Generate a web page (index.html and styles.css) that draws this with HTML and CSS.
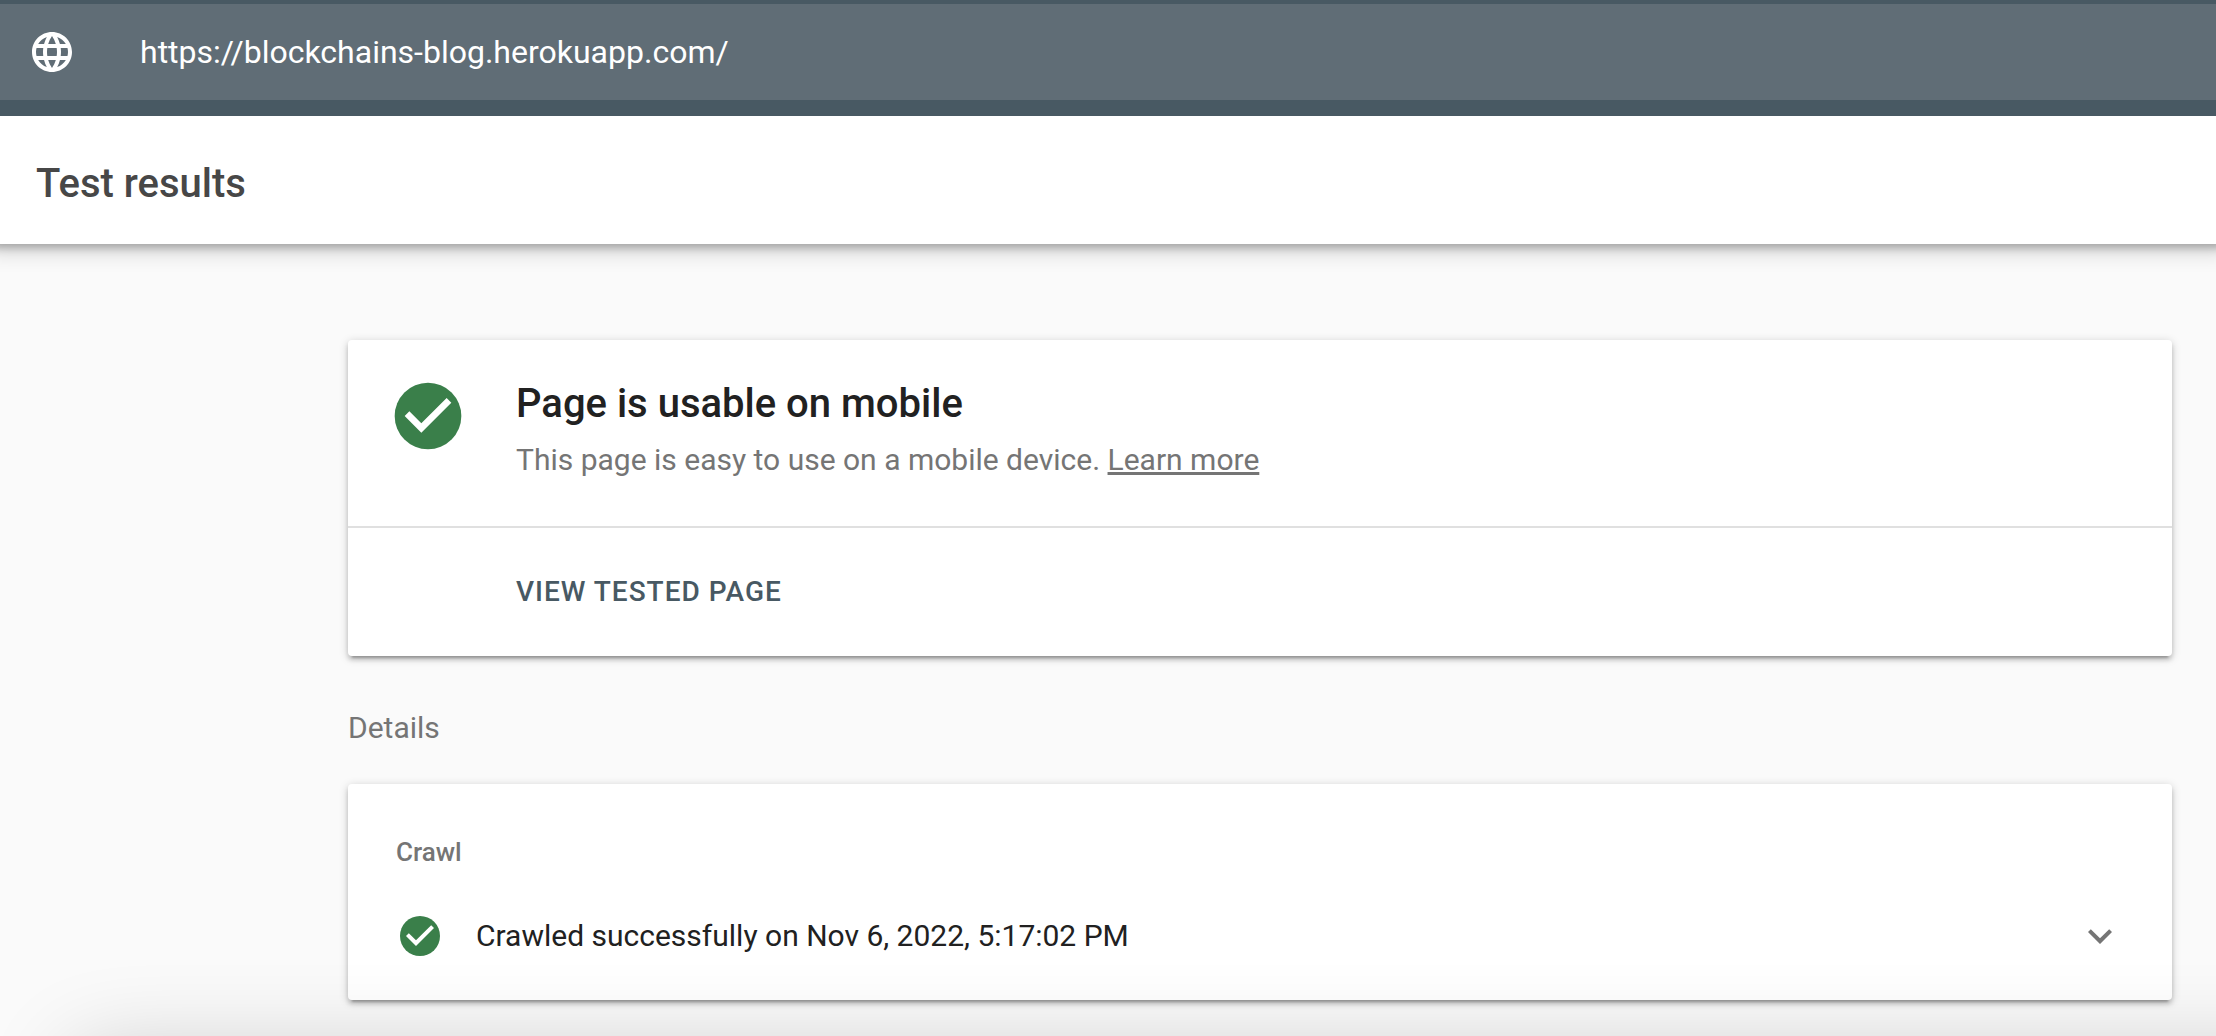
FILE: index.html
```html
<!DOCTYPE html>
<html lang="en">
<head>
<meta charset="utf-8">
<meta name="viewport" content="width=device-width, initial-scale=1">
<title>Test results</title>
<link rel="stylesheet" href="styles.css">
</head>
<body>
<header class="topbar">
  <form class="url-bar">
    <svg class="globe" viewBox="0 0 24 24" aria-hidden="true"><path fill="currentColor" d="M11.99 2C6.47 2 2 6.48 2 12s4.47 10 9.99 10C17.52 22 22 17.52 22 12S17.52 2 11.99 2zm6.93 6h-2.95c-.32-1.25-.78-2.45-1.38-3.56 1.84.63 3.37 1.91 4.33 3.56zM12 4.04c.83 1.2 1.48 2.53 1.91 3.96h-3.82c.43-1.43 1.08-2.76 1.91-3.96zM4.26 14C4.1 13.36 4 12.69 4 12s.1-1.36.26-2h3.38c-.08.66-.14 1.32-.14 2s.06 1.34.14 2H4.26zm.82 2h2.95c.32 1.25.78 2.45 1.38 3.56-1.84-.63-3.37-1.9-4.33-3.56zm2.95-8H5.08c.96-1.66 2.49-2.93 4.33-3.56C8.81 5.55 8.35 6.75 8.03 8zM12 19.96c-.83-1.2-1.48-2.53-1.91-3.96h3.82c-.43 1.43-1.08 2.76-1.91 3.96zM14.34 14H9.66c-.09-.66-.16-1.32-.16-2s.07-1.35.16-2h4.68c.09.65.16 1.32.16 2s-.07 1.34-.16 2zm.25 5.56c.6-1.11 1.06-2.31 1.38-3.56h2.95c-.96 1.65-2.49 2.93-4.33 3.56zM16.36 14c.08-.66.14-1.32.14-2s-.06-1.34-.14-2h3.38c.16.64.26 1.31.26 2s-.1 1.36-.26 2h-3.38z"/></svg>
    <input class="url-input" type="text" aria-label="URL to test" value="https://blockchains-blog.herokuapp.com/" spellcheck="false">
  </form>
</header>
<div class="titlebar"><h1 class="title">Test results</h1></div>
<main class="content">
  <section class="card">
    <div class="verdict">
      <svg class="check-large" viewBox="0 0 24 24" aria-hidden="true"><circle cx="12" cy="12" r="10" fill="#3a7f4a"/><path fill="#fff" d="M10 17l-5-5 1.41-1.41L10 14.17l7.59-7.59L19 8z"/></svg>
      <div class="verdict-text">
        <h2 class="verdict-title">Page is usable on mobile</h2>
        <p class="verdict-desc">This page is easy to use on a mobile device. <a class="learn" href="#learn">Learn more</a></p>
      </div>
    </div>
    <div class="actions"><button class="view-button" type="button">VIEW TESTED PAGE</button></div>
  </section>
  <h2 class="section-label">Details</h2>
  <section class="card details">
    <h3 class="group-label">Crawl</h3>
    <button class="row" type="button" aria-expanded="false">
      <svg class="check-small" viewBox="0 0 24 24" aria-hidden="true"><circle cx="12" cy="12" r="10" fill="#3a7f4a"/><path fill="#fff" d="M10 17l-5-5 1.41-1.41L10 14.17l7.59-7.59L19 8z"/></svg>
      <span class="row-text">Crawled successfully on Nov 6, 2022, 5:17:02 PM</span>
      <svg class="chevron" viewBox="0 0 24 24" aria-hidden="true"><path fill="currentColor" d="M7.41 8.59L12 13.17l4.59-4.58L18 10l-6 6-6-6z"/></svg>
    </button>
  </section>
</main>
<div class="bottom-shade" aria-hidden="true"></div>
</body>
</html>
```
FILE: styles.css
```css
* { box-sizing: border-box; }

body {
  margin: 0;
  min-height: 100vh;
  background: #fafafa;
  color: #212121;
  font-family: Roboto, "Liberation Sans", sans-serif;
  overflow-x: hidden;
}

h1, h2, h3, p { margin: 0; }

button {
  border: 0;
  padding: 0;
  background: none;
  font-family: inherit;
  text-align: left;
  cursor: pointer;
}

/* stacked above the title bar so that its shadow falls only downward */
.topbar {
  position: relative;
  z-index: 1;
  padding: 4px 0 16px;
  background: #485963;
}

.url-bar {
  display: flex;
  align-items: center;
  gap: 64px;
  height: 96px;
  padding: 0 28px;
  background: #606d76;
  color: #fff;
}

.globe {
  flex: none;
  width: 48px;
  height: 48px;
}

.url-input {
  flex: 1;
  min-width: 0;
  border: 0;
  padding: 0;
  outline: 0;
  background: none;
  color: inherit;
  font: 400 32px/40px Roboto, "Liberation Sans", sans-serif;
}

.titlebar {
  padding: 44px 36px 36px;
  background: #fff;
  box-shadow: 0 -4px 8px 8px rgba(0, 0, 0, 0.24), 0 -4px 20px 12px rgba(0, 0, 0, 0.16);
}

.title {
  color: #474747;
  font-size: 40px;
  line-height: 48px;
  font-weight: 500;
}

.content { padding: 96px 44px 36px 348px; }

.card {
  border-radius: 4px;
  background: #fff;
  box-shadow: 0 4px 4px rgba(0, 0, 0, 0.14), 0 6px 2px -4px rgba(0, 0, 0, 0.2), 0 2px 10px rgba(0, 0, 0, 0.2);
}

.verdict {
  display: flex;
  align-items: flex-start;
  gap: 48px;
  padding: 36px 40px 46px;
  border-bottom: 2px solid #e0e0e0;
}

.check-large {
  flex: none;
  width: 80px;
  height: 80px;
}

.verdict-text { padding-top: 4px; }

.verdict-title {
  font-size: 40px;
  line-height: 48px;
  font-weight: 500;
}

.verdict-desc {
  margin-top: 12px;
  color: #757575;
  font-size: 30px;
  line-height: 40px;
}

.learn {
  color: inherit;
  text-decoration-thickness: 3px;
  text-underline-offset: 2px;
  text-decoration-skip-ink: none;
}

.actions { padding: 44px 168px; }

.view-button {
  display: block;
  color: #485963;
  font-size: 28px;
  line-height: 40px;
  font-weight: 500;
  letter-spacing: 1px;
}

.section-label {
  padding: 52px 0 36px;
  color: #757575;
  font-size: 30px;
  line-height: 40px;
  font-weight: 400;
}

.details { padding: 48px 48px 40px; }

.group-label {
  color: #757575;
  font-size: 26px;
  line-height: 40px;
  font-weight: 500;
}

.row {
  display: flex;
  align-items: center;
  width: 100%;
  margin-top: 40px;
  color: #212121;
}

.check-small {
  flex: none;
  width: 48px;
  height: 48px;
}

.row-text {
  flex: 1;
  padding-left: 32px;
  font-size: 30px;
  line-height: 40px;
}

.chevron {
  flex: none;
  width: 48px;
  height: 48px;
  color: #757575;
}

/* soft shade rising from the lower edge of the window */
.bottom-shade {
  position: fixed;
  left: 72px;
  right: -200px;
  bottom: -116px;
  height: 100px;
  border-radius: 20px;
  box-shadow: 0 0 90px rgba(0, 0, 0, 0.2);
  pointer-events: none;
}
```
